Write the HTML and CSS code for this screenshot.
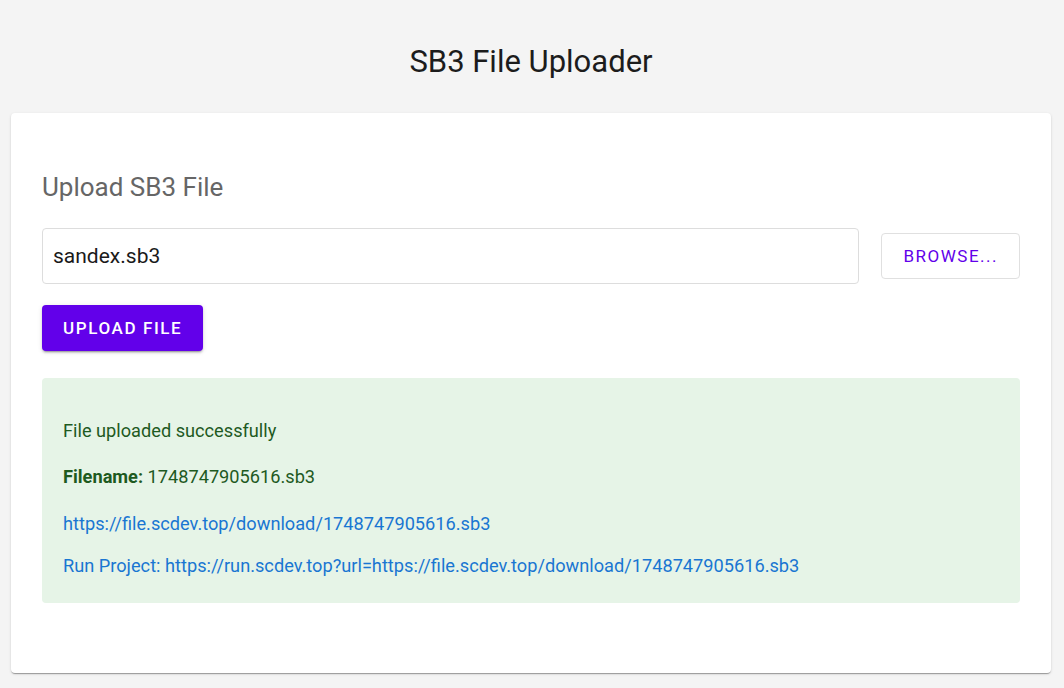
FILE: index.html
```html
<!DOCTYPE html>
<html lang="en">
<head>
    <meta charset="UTF-8">
    <title>SB3 File Uploader</title>
    <link rel="stylesheet" href="styles.css">
</head>
<body>
    <div class="page">
        <h1 class="title">SB3 File Uploader</h1>

        <div class="card">
            <h2 class="card-title">Upload SB3 File</h2>

            <div class="file-row">
                <input class="file-name" type="text" value="sandex.sb3" readonly>
                <button class="browse-btn">Browse...</button>
            </div>

            <button class="upload-btn">Upload File</button>

            <!-- result -->
            <div class="result success">
                <p class="result-msg">File uploaded successfully</p>
                <p class="result-name"><strong>Filename:</strong> 1748747905616.sb3</p>
                <p class="result-link"><a href="#">https://file.scdev.top/download/1748747905616.sb3</a></p>
                <p class="result-run"><a href="#">Run Project: https://run.scdev.top?url=https://file.scdev.top/download/1748747905616.sb3</a></p>
            </div>
        </div>
    </div>
</body>
</html>
```

FILE: styles.css
```css
* {
    box-sizing: border-box;
}

body {
    margin: 0;
    background: #f4f4f4;
    font-family: Roboto, 'Liberation Sans', sans-serif;
    color: #1f1f1f;
}

.page {
    padding: 0 13px 16px 11px;
}

.title {
    margin: 0;
    padding: 43px 0 0;
    height: 113px;
    text-align: center;
    font-size: 31px;
    font-weight: 400;
    line-height: 38px;
    color: #1c1c1c;
}

.card {
    background: white;
    border-radius: 4px;
    box-shadow: 0 2px 1px -1px rgba(0,0,0,0.2), 0 1px 1px rgba(0,0,0,0.14), 0 1px 3px rgba(0,0,0,0.12);
    padding: 58px 31px 70px;
}

.card-title {
    margin: 0 0 25px;
    font-size: 26px;
    font-weight: 400;
    line-height: 32px;
    color: #666;
}

.file-row {
    display: flex;
    align-items: center;
    gap: 22px;
}

.file-name {
    flex: 1;
    height: 56px;
    padding: 0 10px;
    border: 1px solid #ddd;
    border-radius: 4px;
    font-family: inherit;
    font-size: 21px;
    color: #1a1a1a;
    outline: none;
}

.browse-btn {
    height: 46px;
    padding: 0 21px;
    background: white;
    border: 1px solid #e0e0e0;
    border-radius: 4px;
    color: #6200ea;
    font-family: inherit;
    font-size: 17px;
    font-weight: 400;
    letter-spacing: 1.5px;
    text-transform: uppercase;
    cursor: pointer;
}

.upload-btn {
    display: block;
    margin-top: 21px;
    height: 46px;
    padding: 0 21px;
    background: #6200ea;
    border: none;
    border-radius: 4px;
    color: white;
    font-family: inherit;
    font-size: 17px;
    font-weight: 500;
    letter-spacing: 1.6px;
    text-transform: uppercase;
    box-shadow: 0 3px 1px -2px rgba(0,0,0,0.2), 0 2px 2px rgba(0,0,0,0.14), 0 1px 5px rgba(0,0,0,0.12);
    cursor: pointer;
}

.result {
    margin-top: 27px;
    padding: 41px 21px 25px;
    border-radius: 4px;
}

.success {
    background: #e6f4e7;
    color: #1e5a1f;
}

.result p {
    margin: 0;
    font-size: 18.2px;
    line-height: 24px;
}

.result-name {
    margin-top: 22px !important;
}

.result-link {
    margin-top: 23px !important;
}

.result-run {
    margin-top: 18px !important;
}

.result strong {
    font-weight: 700;
}

.result a {
    color: #1976d2;
    text-decoration: none;
}
```
